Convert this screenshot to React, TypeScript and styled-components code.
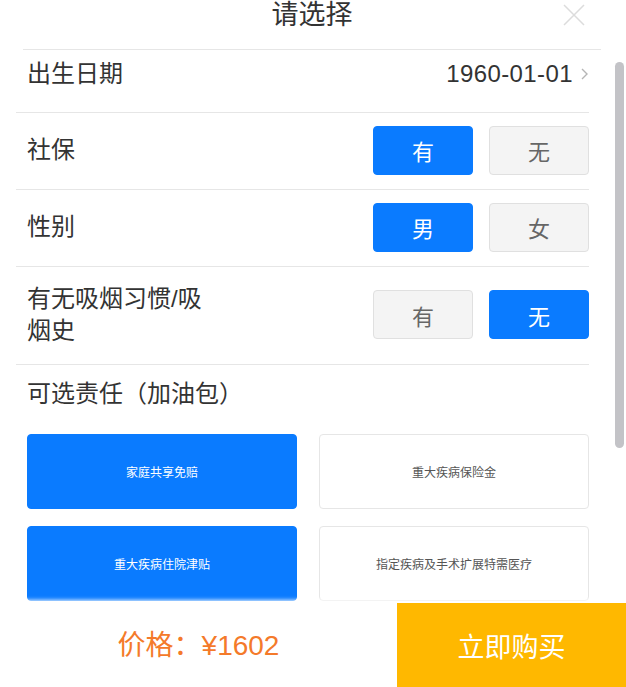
import React from 'react';
import styled, {createGlobalStyle} from 'styled-components';

const Blue = '#0a7bff';
const Line = '#e6e6e6';

const GlobalStyle = createGlobalStyle`
    html, body {
        margin: 0;
        padding: 0;
        background: #fff;
    }
    body {
        font-family: "Liberation Sans", "Noto Sans CJK SC", sans-serif;
        color: #333;
    }
`;

type Choice = {label: string; active?: boolean};

const rows: {label: string; choices: Choice[]; tall?: boolean}[] = [
    {label: '社保', choices: [{label: '有', active: true}, {label: '无'}]},
    {label: '性别', choices: [{label: '男', active: true}, {label: '女'}]},
    {label: '有无吸烟习惯/吸烟史', choices: [{label: '有'}, {label: '无', active: true}], tall: true}
];

const extras: Choice[] = [
    {label: '家庭共享免赔', active: true},
    {label: '重大疾病保险金'},
    {label: '重大疾病住院津贴', active: true},
    {label: '指定疾病及手术扩展特需医疗'}
];

const Chevron = () => (
    <svg width='10' height='14' viewBox='0 0 10 14'>
        <polyline points='3,2 8,7 3,12' fill='none' stroke='#b5b5b5' strokeWidth='1.4' />
    </svg>
);

const CloseIcon = () => (
    <svg width='22' height='22' viewBox='0 0 22 22'>
        <path d='M1 1 L21 21 M21 1 L1 21' stroke='#dcdcdc' strokeWidth='1.5' />
    </svg>
);

export default function App() {
    return (
        <Sheet>
            <GlobalStyle />
            <Header>
                <span />
                <Title>请选择</Title>
                <Close>
                    <CloseIcon />
                </Close>
            </Header>

            <Body>
                <DateRow>
                    <Label>出生日期</Label>
                    <DateValue>
                        1960-01-01
                        <Chevron />
                    </DateValue>
                </DateRow>

                {rows.map(row => (
                    <Row key={row.label} tall={row.tall}>
                        <Label>{row.label}</Label>
                        <Choices>
                            {row.choices.map(choice => (
                                <ChoiceButton key={choice.label} active={choice.active}>
                                    {choice.label}
                                </ChoiceButton>
                            ))}
                        </Choices>
                    </Row>
                ))}

                <SectionTitle>可选责任（加油包）</SectionTitle>
                <ExtraGrid>
                    {extras.map(extra => (
                        <ExtraCard key={extra.label} active={extra.active}>
                            {extra.label}
                        </ExtraCard>
                    ))}
                </ExtraGrid>
            </Body>

            <ScrollThumb />

            <Footer>
                <Price>价格：¥1602</Price>
                <BuyButton>立即购买</BuyButton>
            </Footer>
        </Sheet>
    );
}

const Sheet = styled.div`
    position: relative;
    height: 687px;
    width: 626px;
    overflow: hidden;
    display: flex;
    flex-direction: column;
    background: #fff;
`;

const Header = styled.header`
    display: grid;
    grid-template-columns: 1fr auto 1fr;
    align-items: start;
    height: 49px;
    margin: 0 25px 0 23px;
    border-bottom: 1px solid ${Line};
`;

const Title = styled.h1`
    margin: 0;
    font-size: 27px;
    font-weight: normal;
    line-height: 30px;
    color: #333;
`;

const Close = styled.span`
    justify-self: end;
    margin: 4px 16px 0 0;
    display: flex;
`;

const Body = styled.main`
    flex: 1;
    overflow: hidden;
    padding: 0 37px 0 16px;
`;

const Row = styled.div<{tall?: boolean}>`
    display: flex;
    align-items: center;
    justify-content: space-between;
    height: ${({tall}) => (tall ? 95 : 74)}px;
    padding: 0 0 2px 11px;
    border-bottom: 1px solid ${Line};
`;

const DateRow = styled(Row)`
    align-items: flex-start;
    height: 54px;
    padding: 8px 0 0 11px;
`;

const Label = styled.div`
    max-width: 195px;
    font-size: 24px;
    line-height: 32px;
    color: #333;
`;

const DateValue = styled.div`
    display: flex;
    align-items: center;
    gap: 6px;
    font-size: 24px;
    line-height: 32px;
    letter-spacing: 0.4px;
    color: #333;
`;

const Choices = styled.div`
    display: flex;
    gap: 16px;
`;

const ChoiceButton = styled.button<{active?: boolean}>`
    width: 100px;
    height: 49px;
    padding: 0;
    border-radius: 4px;
    font-family: inherit;
    font-size: 22px;
    border: 1px solid ${({active}) => (active ? Blue : '#e0e0e0')};
    background: ${({active}) => (active ? Blue : '#f4f4f4')};
    color: ${({active}) => (active ? '#fff' : '#666')};
`;

const SectionTitle = styled.h2`
    margin: 0;
    padding: 13px 0 0 11px;
    font-size: 24px;
    font-weight: normal;
    line-height: 32px;
    color: #333;
`;

const ExtraGrid = styled.div`
    display: grid;
    grid-template-columns: 270px 270px;
    grid-auto-rows: 75px;
    column-gap: 22px;
    row-gap: 17px;
    margin-top: 24px;
    padding-left: 11px;
`;

const ExtraCard = styled.div<{active?: boolean}>`
    display: flex;
    align-items: center;
    justify-content: center;
    border-radius: 4px;
    font-size: 12px;
    border: 1px solid ${({active}) => (active ? Blue : Line)};
    background: ${({active}) => (active ? Blue : '#fff')};
    color: ${({active}) => (active ? '#fff' : '#555')};
`;

const ScrollThumb = styled.div`
    position: absolute;
    top: 62px;
    right: 2px;
    width: 9px;
    height: 386px;
    border-radius: 5px;
    background: #c3c3c7;
`;

const Footer = styled.footer`
    position: relative;
    display: flex;
    height: 84px;
    flex-shrink: 0;
    background: #fff;
    box-shadow: 0 -3px 4px rgba(255, 255, 255, 0.9);
`;

const Price = styled.div`
    flex: 1;
    display: flex;
    align-items: center;
    justify-content: center;
    padding-bottom: 4px;
    font-size: 28px;
    color: #f47a2a;
`;

const BuyButton = styled.button`
    width: 229px;
    border: none;
    padding: 0;
    font-family: inherit;
    font-size: 27px;
    color: #fff;
    background: #ffb800;
`;
